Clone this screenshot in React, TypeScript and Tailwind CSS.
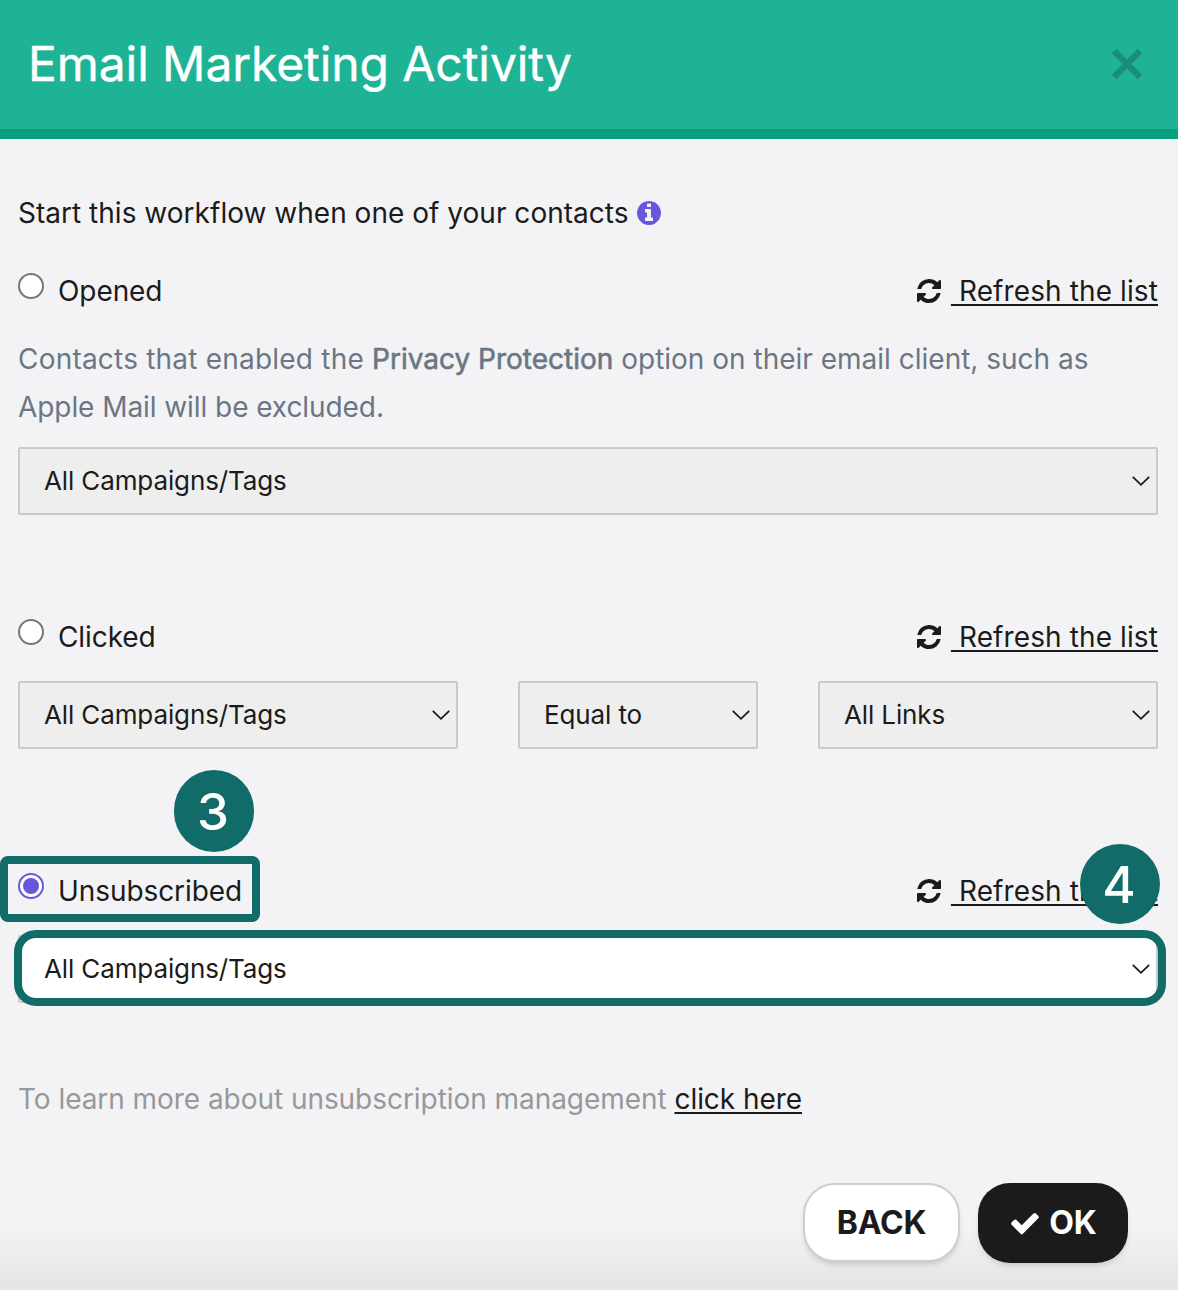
import React from "react";

const RefreshIcon = () => (
  <svg viewBox="0 0 1792 1792" className="size-7 shrink-0" fill="currentColor">
    <path d="M1639 1056q0 5-1 7-64 268-268 434.5t-478 166.5q-146 0-282.5-55t-243.5-157l-129 129q-19 19-45 19t-45-19-19-45v-448q0-26 19-45t45-19h448q26 0 45 19t19 45-19 45l-137 137q71 66 161 102t187 36q134 0 250-65t186-179q11-17 53-117 8-23 30-23h192q13 0 22.5 9.5t9.5 22.5zm25-800v448q0 26-19 45t-45 19h-448q-26 0-45-19t-19-45 19-45l138-138q-148-137-349-137-134 0-250 65t-186 179q-11 17-53 117-8 23-30 23h-199q-13 0-22.5-9.5t-9.5-22.5v-7q65-268 270-434.5t480-166.5q146 0 284 55.5t245 156.5l130-129q19-19 45-19t45 19 19 45z" />
  </svg>
);

const InfoIcon = () => (
  <svg viewBox="0 0 1792 1792" className="size-7 shrink-0 text-[#6658dd]" fill="currentColor">
    <path d="M1152 1376v-160q0-14-9-23t-23-9h-96v-512q0-14-9-23t-23-9h-320q-14 0-23 9t-9 23v160q0 14 9 23t23 9h96v320h-96q-14 0-23 9t-9 23v160q0 14 9 23t23 9h448q14 0 23-9t9-23zm-128-896v-160q0-14-9-23t-23-9h-192q-14 0-23 9t-9 23v160q0 14 9 23t23 9h192q14 0 23-9t9-23zm640 416q0 209-103 385.5t-279.5 279.5-385.5 103-385.5-103-279.5-279.5-103-385.5 103-385.5 279.5-279.5 385.5-103 385.5 103 279.5 279.5 103 385.5z" />
  </svg>
);

const CheckIcon = () => (
  <svg viewBox="0 0 1792 1792" className="size-8 shrink-0" fill="currentColor">
    <path d="M1671 566q0 40-28 68l-724 724-136 136q-28 28-68 28t-68-28l-136-136-362-362q-28-28-28-68t28-68l136-136q28-28 68-28t68 28l294 295 656-657q28-28 68-28t68 28l136 136q28 28 28 68z" />
  </svg>
);

const CloseIcon = () => (
  <svg viewBox="0 0 32 32" className="size-8" stroke="currentColor" strokeWidth="6.4">
    <path d="M3 3 29 29M29 3 3 29" />
  </svg>
);

const SelectBox = ({ label, className = "", active = false }) => (
  <button
    className={`flex h-[68px] items-center justify-between rounded-[2px] border-2 border-[#cacaca] pl-6 pr-1.5 text-[26px] tracking-[-0.12px] ${
      active ? "bg-white" : "bg-[#eeeeee]"
    } ${className}`}
  >
    <span>{label}</span>
    <svg
      viewBox="0 0 18 12"
      className="h-3 w-[18px]"
      fill="none"
      stroke="currentColor"
      strokeWidth="1.8"
    >
      <path d="M.8 1.8 9 9.8 17.2 1.8" />
    </svg>
  </button>
);

const OptionRow = ({ label, checked = false, className = "" }) => (
  <div className={`flex h-12 justify-between ${className}`}>
    <label className="flex gap-3.5">
      <span
        className={`mt-1.5 flex size-[26px] items-center justify-center rounded-full border-2 bg-white ${
          checked ? "border-[#6658dd]" : "border-[#767676]"
        }`}
      >
        {checked && <span className="size-4 rounded-full bg-[#6658dd]" />}
      </span>
      <span className="tracking-[-0.08px]">{label}</span>
    </label>
    <a className="flex items-center gap-2">
      <RefreshIcon />
      <span className="whitespace-pre tracking-[0.11px] underline decoration-2 underline-offset-3">
        {" Refresh the list"}
      </span>
    </a>
  </div>
);

const App = () => {
  return (
    <div className="relative flex h-[1290px] w-[1178px] flex-col overflow-hidden bg-[#f3f3f5] font-['Inter',sans-serif] text-[28px] leading-[48px] tracking-normal text-[#1b1b1b]">
      {/* Header */}
      <header className="flex h-[139px] items-center justify-between border-b-10 border-[#069f80] bg-[#1eb395] pb-0.5 pl-7 pr-[35px]">
        <h1 className="text-[48px] tracking-[-0.08px] text-white [-webkit-text-stroke:0.4px_white]">
          Email Marketing Activity
        </h1>
        <button className="text-[#198f77]">
          <CloseIcon />
        </button>
      </header>

      {/* Trigger options */}
      <main className="pl-[18px] pr-5 pt-[50px]">
        <div className="flex h-12 items-center gap-1.5">
          <span className="tracking-[0.02px]">Start this workflow when one of your contacts</span>
          <InfoIcon />
        </div>

        <OptionRow label="Opened" className="mt-[30px]" />
        <p className="mt-5 text-[#6b7685]">
          <span className="tracking-[0.21px]">Contacts that enabled the </span>
          <strong className="font-normal [-webkit-text-stroke:0.6px_#6b7685]">
            Privacy Protection
          </strong>{" "}
          option on their email client, such as
          <br />
          <span className="tracking-[-0.07px]">Apple Mail will be excluded.</span>
        </p>
        <SelectBox label="All Campaigns/Tags" className="mt-4 w-full" />

        <OptionRow label="Clicked" className="mt-[98px]" />
        <div className="mt-5 flex gap-[60px]">
          <SelectBox label="All Campaigns/Tags" className="w-[440px]" />
          <SelectBox label="Equal to" className="w-60" />
          <SelectBox label="All Links" className="w-[340px]" />
        </div>

        <OptionRow label="Unsubscribed" checked className="mt-[118px]" />
        <SelectBox label="All Campaigns/Tags" active className="mt-5 w-full" />

        <p className="mt-[72px] tracking-[-0.05px] text-[#98989b]">
          To learn more about unsubscription management{" "}
          <a className="text-[#1b1b1b] underline decoration-2 underline-offset-3">click here</a>
        </p>
      </main>

      {/* Footer */}
      <div className="absolute inset-x-0 bottom-0 h-16 bg-linear-to-b from-transparent to-black/6" />
      <footer className="relative mt-[60px] flex justify-end gap-[18px] pr-[50px] text-[32px] font-bold tracking-[-0.2px]">
        <button className="flex h-[79px] w-[157px] items-center justify-center rounded-[32px] border-2 border-[#cecece] bg-white shadow-md">
          BACK
        </button>
        <button className="flex h-20 w-[150px] items-center justify-center gap-2 rounded-[32px] bg-[#1b1b1b] text-white shadow-md">
          <CheckIcon />
          OK
        </button>
      </footer>

      {/* Step callouts */}
      <div className="absolute left-0 top-[856px] h-[66px] w-[260px] rounded-lg border-8 border-[#116c69]" />
      <div className="absolute left-3.5 top-[930px] h-[76px] w-[1152px] rounded-[22px] border-8 border-[#116c69]" />
      <div className="absolute left-[174px] top-[770px] flex h-[82px] w-20 items-center justify-center rounded-full bg-[#116c69] pr-0.5 pt-0.5 text-[51px] font-medium text-white">
        3
      </div>
      <div className="absolute left-[1080px] top-[844px] flex size-20 items-center justify-center rounded-full bg-[#116c69] pr-0.5 pt-0.5 text-[51px] font-medium text-white">
        4
      </div>
    </div>
  );
};

export default App;
